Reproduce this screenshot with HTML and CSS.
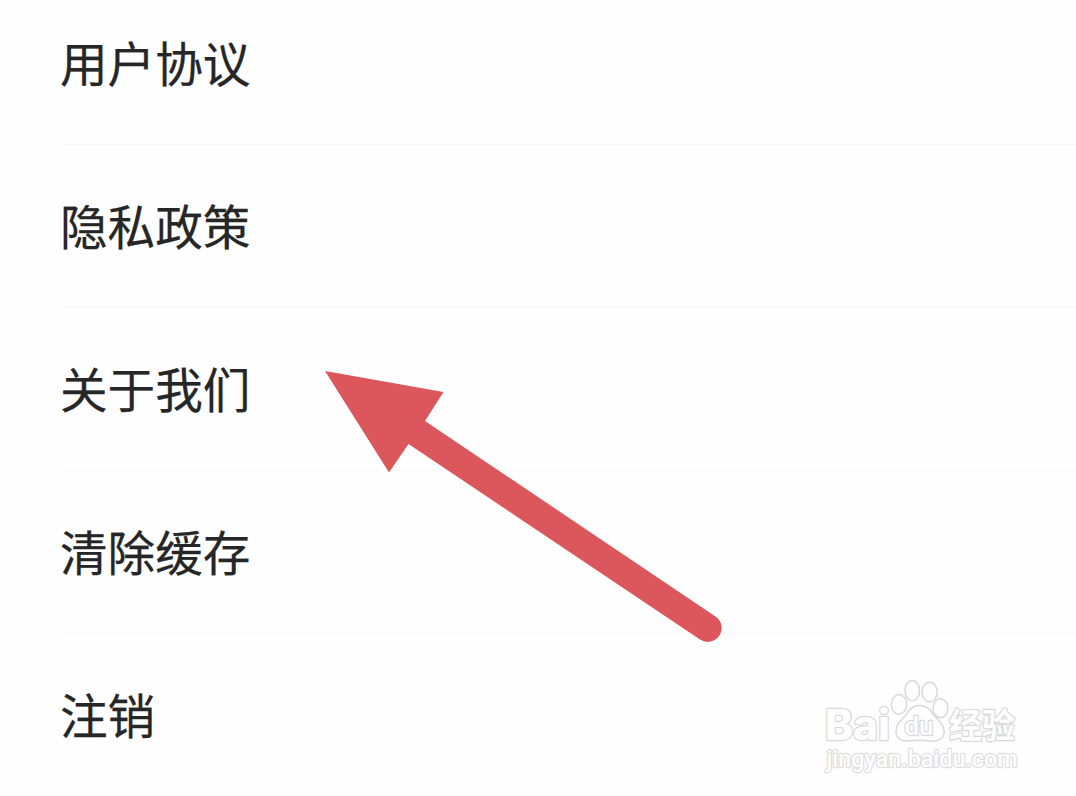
FILE: index.html
```html
<!DOCTYPE html>
<html lang="zh-CN">
<head>
<meta charset="utf-8">
<title>设置</title>
<link rel="stylesheet" href="styles.css">
</head>
<body>
<main class="screen">
<ul class="menu">
<li class="item">用户协议</li>
<li class="item">隐私政策</li>
<li class="item">关于我们</li>
<li class="item">清除缓存</li>
<li class="item">注销</li>
</ul>
<svg class="arrow" viewBox="0 0 1076 796"><path d="M325 371L443.500 392L425 421L715.500 616.500A13.500 13.500 0 0 1 700 639.500L408.500 444L389 472.500Z"/></svg>
<svg class="mark" viewBox="0 0 215 110">
<g class="outline">
<text class="bai" x="10" y="70" textLength="65" lengthAdjust="spacingAndGlyphs">Bai</text>
<path class="paw" d="M104.500 35.500C97 35.500 94 40 91 45C87 50 81 53 81 62C81 68 86 71.500 93 71C101 70 108 70 116 71C124 72 129.500 68 129 61C129 53 122 50 118 44C115 39 111 35.500 104.500 35.500Z"/>
<ellipse class="paw" cx="84" cy="34.300" rx="7.700" ry="9.700"/>
<ellipse class="paw" cx="97.300" cy="20.700" rx="7.300" ry="10.200"/>
<ellipse class="paw" cx="114.700" cy="22" rx="7.700" ry="9.700"/>
<ellipse class="paw" cx="125.500" cy="38.300" rx="7.500" ry="9.500"/>
<text class="du" x="89.500" y="64.500" textLength="29" lengthAdjust="spacingAndGlyphs">du</text>
<text class="jing" x="134" y="67.500" textLength="66" lengthAdjust="spacingAndGlyphs">经验</text>
<text class="url" x="11.500" y="96.500" textLength="191" lengthAdjust="spacingAndGlyphs">jingyan.baidu.com</text>
</g>
</svg>
</main>
</body>
</html>
```
FILE: styles.css
```css
body{margin:0;background:#fefefe}
.screen{position:relative;width:1076px;height:796px;overflow:hidden}
.menu{list-style:none;margin:0;padding:0 0 0 63px}
.item{height:163px;box-sizing:border-box;border-bottom:1px solid #f7f7f7;font:47.600px/160px "Noto Sans CJK SC",sans-serif;color:#262626;text-indent:-3px;-webkit-text-stroke:.25px #262626}
.item:first-child{height:145px;line-height:124px}
.item:last-child{border-bottom:0}
.arrow{position:absolute;left:0;top:0;width:1076px;height:796px;fill:#db575c}
.mark{position:absolute;left:815px;top:670px;width:215px;height:110px}
.outline{fill:#fefefe;stroke:#d9d9d9;stroke-width:2.4;stroke-linejoin:round;paint-order:stroke;font-family:"Liberation Sans","Noto Sans CJK SC",sans-serif}
.paw{stroke-width:1.5;paint-order:normal}
.bai{font-family:Inter,sans-serif;font-size:42px;font-weight:800}
.du{font-family:Roboto,sans-serif;font-size:26px;font-weight:500}
.jing{font-size:34px;font-weight:bold}
.url{font-family:Roboto,sans-serif;font-size:23px;font-weight:500;stroke:#dedede}
```
